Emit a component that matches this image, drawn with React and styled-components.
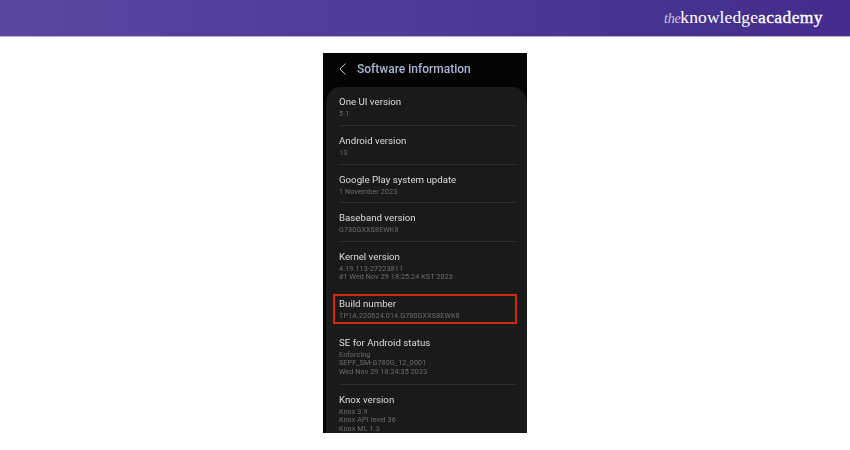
import styled, { createGlobalStyle } from 'styled-components'

const GlobalStyle = createGlobalStyle`
  html, body {
    margin: 0;
    padding: 0;
    background: #fff;
  }
`;

const Page = styled.div`
  width: 850px;
  height: 450px;
  overflow: hidden;
  background: #fff;
`;

const Banner = styled.header`
  display: flex;
  justify-content: flex-end;
  align-items: center;
  box-sizing: border-box;
  height: 37px;
  padding-right: 27px;
  background: linear-gradient(90deg, #5b479f 0%, #4f3b98 45%, #432c8b 100%);
  border-bottom: 1px solid #b5abd3;
`;

const Logo = styled.div`
  display: flex;
  align-items: baseline;
  color: #fff;
  font-family: "Liberation Serif", serif;
  font-size: 17.5px;
  line-height: 20px;
  letter-spacing: 0.1px;
`;

const LogoThe = styled.span`
  font-style: italic;
  font-size: 14px;
  color: #cfc8e4;
  letter-spacing: -0.3px;
`;

const LogoBold = styled.span`
  letter-spacing: 0.4px;
  -webkit-text-stroke: 0.35px #fff;
`;

const Phone = styled.main`
  width: 204px;
  height: 380px;
  margin: 16px 0 0 323px;
  overflow: hidden;
  background: #040404;
  font-family: Roboto, "Liberation Sans", sans-serif;
  filter: blur(0.3px);
`;

const TopBar = styled.div`
  display: flex;
  align-items: center;
  gap: 11px;
  box-sizing: border-box;
  height: 34px;
  padding: 0 0 2px 16px;
`;

const Title = styled.h1`
  margin: 0;
  color: #a9b6d6;
  font-size: 12px;
  font-weight: 500;
`;

const Card = styled.section`
  box-sizing: border-box;
  height: 346px;
  margin-left: 3px;
  padding: 0 10px 0 13px;
  background: #1b1a1a;
  border-radius: 15px 15px 0 0;
`;

const Row = styled.div`
  box-sizing: border-box;
  position: relative;
  height: ${(p) => p.$height}px;
  padding-top: ${(p) => p.$top}px;
  border-bottom: ${(p) => (p.$line ? '1px solid #2f2e2e' : 'none')};
`;

const Label = styled.div`
  margin-bottom: 1.5px;
  color: #dcdcdc;
  font-size: 9.7px;
  line-height: 12px;
  white-space: nowrap;
`;

const Detail = styled.div`
  color: #6d6d6d;
  font-size: 7.2px;
  line-height: 8.7px;
  letter-spacing: 0.1px;
  white-space: nowrap;
`;

const Highlight = styled.div`
  position: absolute;
  top: 0;
  left: -6px;
  width: 184px;
  height: 30px;
  box-sizing: border-box;
  border: 2px solid #d4270f;
`;

const rows = [
  { label: 'One UI version', details: ['5.1'], height: 39, top: 9, line: true },
  { label: 'Android version', details: ['13'], height: 39, top: 9, line: true },
  { label: 'Google Play system update', details: ['1 November 2023'], height: 38, top: 9, line: true },
  { label: 'Baseband version', details: ['G780GXXS8EWK8'], height: 39, top: 9, line: true },
  { label: 'Kernel version', details: ['4.19.113-27223811', '#1 Wed Nov 29 18:25:24 KST 2023'], height: 52, top: 9, line: false },
  { label: 'Build number', details: ['TP1A.220624.014.G780GXXS8EWK8'], height: 30, top: 4, line: false, marked: true },
  { label: 'SE for Android status', details: ['Enforcing', 'SEPF_SM-G780G_12_0001', 'Wed Nov 29 18:24:35 2023'], height: 61, top: 13, line: true },
  { label: 'Knox version', details: ['Knox 3.9', 'Knox API level 36', 'Knox ML 1.3'], height: 49, top: 9, line: false },
];

function App() {
  return (
    <>
      <GlobalStyle />
      <Page>
        <Banner>
          <Logo>
            <LogoThe>the</LogoThe>
            knowledge
            <LogoBold>academy</LogoBold>
          </Logo>
        </Banner>
        <Phone>
          <TopBar>
            <svg width="7" height="12" viewBox="0 0 7 12" fill="none">
              <path d="M6.5 0.5 L1 6 L6.5 11.5" stroke="#c4c4c4" strokeWidth="1" />
            </svg>
            <Title>Software information</Title>
          </TopBar>
          <Card>
            {rows.map((row) => (
              <Row key={row.label} $height={row.height} $top={row.top} $line={row.line}>
                {row.marked && <Highlight />}
                <Label>{row.label}</Label>
                {row.details.map((text) => (
                  <Detail key={text}>{text}</Detail>
                ))}
              </Row>
            ))}
          </Card>
        </Phone>
      </Page>
    </>
  )
}

export default App
